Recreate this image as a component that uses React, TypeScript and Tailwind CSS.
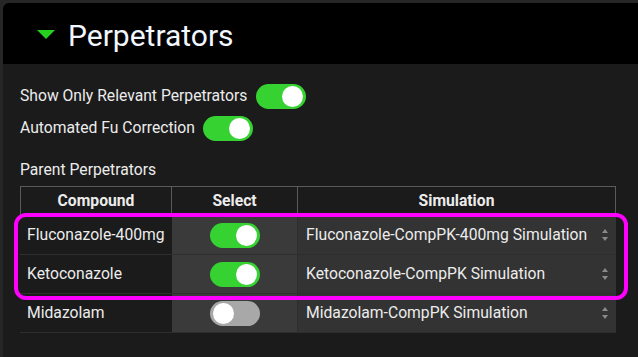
import React from "react";

function Toggle({ on }: { on: boolean }) {
  return (
    <div
      className={`relative w-[50px] h-[25px] rounded-full ${on ? "bg-[#35d232]" : "bg-[#a8a8a8]"}`}
    >
      <div
        className={`absolute top-[2px] w-[21px] h-[21px] rounded-full bg-white ${on ? "right-[3px]" : "left-[3px]"}`}
      />
    </div>
  );
}

function Spinner() {
  return (
    <svg width="8" height="14" viewBox="0 0 8 14" className="shrink-0">
      <path d="M4 1 L7 5 L1 5 Z" fill="#8a8a8a" />
      <path d="M4 13 L7 9 L1 9 Z" fill="#8a8a8a" />
    </svg>
  );
}

const rows = [
  { name: "Fluconazole-400mg", on: true, sim: "Fluconazole-CompPK-400mg Simulation" },
  { name: "Ketoconazole", on: true, sim: "Ketoconazole-CompPK Simulation" },
  { name: "Midazolam", on: false, sim: "Midazolam-CompPK Simulation" },
];

export default function App() {
  return (
    <div
      className="w-[638px] h-[357px] bg-[#262626] pt-[3px] pl-[3px] overflow-hidden text-[#ececec]"
      style={{ fontFamily: "Roboto, 'Liberation Sans', sans-serif" }}
    >
      <div className="h-full rounded-tl-[6px] bg-[#1b1b1b] overflow-hidden">
        {/* header */}
        <div className="h-[61px] bg-black flex items-center pl-[34px] pt-[5px]">
          <svg width="18" height="9" viewBox="0 0 18 9" className="mr-[13px] mt-[-4px]">
            <path d="M0 0 H18 L9 9 Z" fill="#27d11f" />
          </svg>
          <span className="text-[30px] leading-none text-[#f2f6ff]">Perpetrators</span>
        </div>

        <div className="pl-[17px] pt-[19px] text-[15.7px]">
          <div className="flex items-center gap-[9px] h-[26px]">
            <span>Show Only Relevant Perpetrators</span>
            <Toggle on />
          </div>
          <div className="flex items-center gap-[8px] h-[26px] mt-[6px]">
            <span>Automated Fu Correction</span>
            <Toggle on />
          </div>
          <div className="mt-[19px] h-[20px] flex items-center">Parent Perpetrators</div>

          <div className="relative mt-[6px] w-[596px]">
            <div className="flex h-[30px] border border-[#5a5a5a] font-bold">
              <div className="w-[151px] flex items-center justify-center border-r border-[#5a5a5a]">Compound</div>
              <div className="w-[126px] flex items-center justify-center border-r border-[#5a5a5a]">Select</div>
              <div className="flex-1 flex items-center justify-center">Simulation</div>
            </div>
            {rows.map((r) => (
              <div key={r.name} className="flex h-[39px] border-b border-[#2e2e2e]">
                <div className="w-[152px] flex items-center pl-[7px]">{r.name}</div>
                <div className="w-[126px] flex items-center justify-center bg-[#3a3a3a] border-r border-[#2e2e2e]">
                  <Toggle on={r.on} />
                </div>
                <div className="flex-1 flex items-center justify-between pl-[8px] pr-[7px] bg-[#333333]">
                  <span>{r.sim}</span>
                  <Spinner />
                </div>
              </div>
            ))}
            <div className="absolute left-[-6px] top-[27px] w-[614px] h-[87px] rounded-[12px] border-[4px] border-[#ff00ff] pointer-events-none" />
          </div>
        </div>
      </div>
    </div>
  );
}
